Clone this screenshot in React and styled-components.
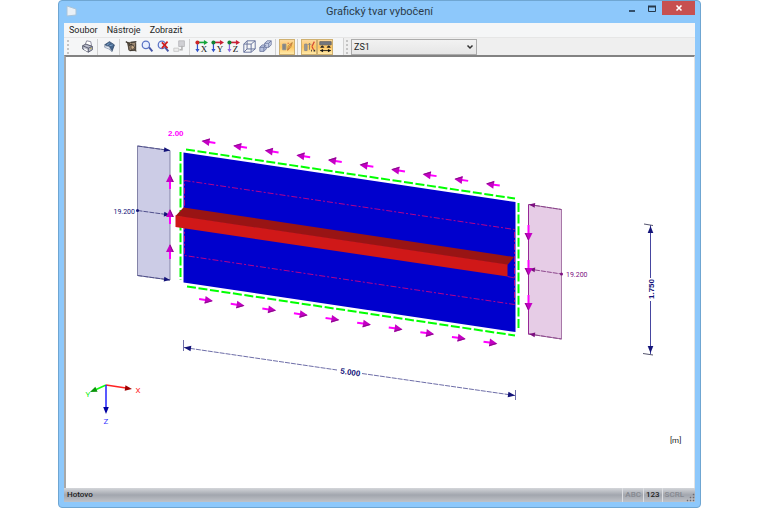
import React, { useState } from "react";
import styled, { createGlobalStyle } from "styled-components";

const NAVY = "#14147a";
const PURPLE = "#7d1080";

const steps = [0, 1, 2, 3, 4, 5, 6, 7, 8, 9];

const menuItems = ["Soubor", "Nástroje", "Zobrazit"];

const PrintIcon = () => (
  <Icon>
    <path d="M5 6 7 1l5 1 1 5z" fill="#fff" stroke="#77778c" />
    <path d="M2 7l4-2 8 3v4l-5 3-7-4z" fill="#b9bccb" stroke="#4a4d60" />
    <path d="M2 7l7 3 5-2M9 10v5" fill="none" stroke="#4a4d60" />
    <path d="M4 10l4 2v2l-4-2z" fill="#fff" />
    <path d="M11 11l2-1" stroke="#c8b428" />
  </Icon>
);

const BookIcon = () => (
  <Icon>
    <path d="M2 6l6-4 6 4-3 8-3-6z" fill="#44658c" stroke="#2f4667" />
    <path d="M2 7l5 1 4 6-4-3-5-2z" fill="#e8edf5" stroke="#8b99ae" />
    <path d="M5 6l3-2M8 7l4-1" stroke="#8fb2d8" />
  </Icon>
);

const SceneIcon = () => (
  <Icon>
    <path d="M3 3h10v10H5z" fill="#a08c76" stroke="#5c5248" />
    <path d="M1 2l5 3M7 3l7-1M4 7l5-2M6 13l7-1" stroke="#3f3931" strokeWidth="1.500" />
    <path d="M7 8l3-2 2 4-4 2z" fill="#c9ac88" stroke="#4a4037" />
    <path d="M11 11l3 3M4 4l1 8M13 4v8" stroke="#51483d" strokeWidth="1.500" />
  </Icon>
);

const ZoomIcon = ({ cancel }) => (
  <Icon>
    <circle cx="6" cy="6" r="4.500" fill="#e8efff" stroke="#5b73c4" strokeWidth="1.500" />
    <path d="M10 9l4 5" stroke="#4656a6" strokeWidth="2.400" />
    {cancel && <path d="M6 3l7 7M13 2l-7 8" stroke="#cf1d1d" strokeWidth="2" />}
  </Icon>
);

const PasteIcon = () => (
  <Icon>
    <path d="M7 1h7v7H7z" fill="#d0d0d4" stroke="#b4b4b8" />
    <path d="M1 10h6v4H1z" fill="#ececec" stroke="#c4c4c4" />
    <path d="M11 7v5H8" stroke="#b4b4b4" strokeWidth="2" fill="none" />
  </Icon>
);

const AxisIcon = ({ name }) => (
  <Icon>
    <path d="M3 3v9" stroke={name === "Z" ? "#8a6be0" : "#3153c8"} strokeWidth="1.500" />
    <path d="M3 3h9" stroke={name === "X" ? "#15a53a" : "#c92036"} strokeWidth="2" />
    <path d="M11 0l5 3-5 3z" fill={name === "X" ? "#15a53a" : "#c92036"} />
    <circle cx="3" cy="3" r="2.500" fill={name === "X" ? "#cf2525" : "#128333"} />
    <path d="M.5 11h5L3 15z" fill={name === "Z" ? "#8a6be0" : "#3153c8"} />
    <text x="7" y="15" fontSize="11" fontFamily="Liberation Serif, serif" fill="#111">
      {name}
    </text>
  </Icon>
);

const CubeIcon = () => (
  <Icon>
    <path d="M1 5h9v10H1zM5 1h10v10H5zM1 5l4-4M10 5l5-4M10 15l5-4M1 15l4-4" fill="none" stroke="#68739c" strokeWidth="1.200" />
  </Icon>
);

const BoxesIcon = () => (
  <Icon>
    <path d="M1 9l3-3h5v5l-3 3H1z" fill="#b8c2df" stroke="#65719a" />
    <path d="M7 4l3-3h5v5l-3 3H7z" fill="#ccd4ea" stroke="#65719a" />
    <path d="M1 9h5v5M6 9l3-3M7 4h5v5M12 4l3-3" fill="none" stroke="#65719a" />
  </Icon>
);

const ShapeIcon = () => (
  <Icon>
    <path d="M2 5h4v7H2z" fill="#858585" stroke="#8f8f8f" />
    <path d="M8 12l1-5 5-4-2 6-3 3z" fill="#f6d36e" stroke="#b08a3c" />
    <path d="M8 4l2 0M8 13l5-9" stroke="#cb5a36" />
  </Icon>
);

const LoadIcon = () => (
  <Icon>
    <path d="M2 5h3v8H2z" fill="#999" stroke="#888" />
    <path d="M8 12V4M6 6l2-2 2 2" fill="none" stroke="#777" />
    <path d="M11 8l3-6M11 8l2 4" stroke="#d44a35" strokeWidth="1.500" />
    <path d="M10 13h1M13 13h2" stroke="#333" strokeWidth="2" />
  </Icon>
);

const DimensionIcon = () => (
  <Icon>
    <path d="M1 2h14v4H1z" fill="#73777f" stroke="#666" />
    <path d="M4 7l-2 2h4zM12 7l-2 2h4z" fill="#222" stroke="#222" />
    <path d="M2 13h12" stroke="#111" />
    <path d="M1 13l4-2v4zM15 13l-4-2v4z" fill="#111" />
  </Icon>
);

const tools = [
  [{ label: "Tisk", icon: <PrintIcon /> }],
  [{ label: "Nápověda", icon: <BookIcon /> }],
  [
    { label: "Pohled", icon: <SceneIcon /> },
    { label: "Lupa", icon: <ZoomIcon /> },
    { label: "Zrušit lupu", icon: <ZoomIcon cancel /> },
    { label: "Vložit", icon: <PasteIcon />, disabled: true },
  ],
  [
    { label: "Pohled X", icon: <AxisIcon name="X" /> },
    { label: "Pohled Y", icon: <AxisIcon name="Y" /> },
    { label: "Pohled Z", icon: <AxisIcon name="Z" /> },
    { label: "Izometrie", icon: <CubeIcon /> },
    { label: "Perspektiva", icon: <BoxesIcon /> },
  ],
  [{ label: "Tvar", icon: <ShapeIcon />, toggle: true }],
  [
    { label: "Zatížení", icon: <LoadIcon />, toggle: true },
    { label: "Kóty", icon: <DimensionIcon />, toggle: true },
  ],
];

// arrow of the given length, tip at x/y, pointing right before it is turned
const ForceArrow = ({ x, y, angle, length = 14 }) => (
  <g transform={`translate(${x} ${y}) rotate(${angle})`}>
    <path d={`M${-length} 0H-6`} stroke="#f0f" strokeWidth="2" />
    <path d="M0 0l-8-4v8z" fill="#c400c4" />
    <path d="M-1 0l-7 3" stroke="#870f87" />
  </g>
);

const LineArrow = ({ x, y, angle, color = NAVY, size = 6 }) => (
  <path
    d={`M0 0l${-size}-${size * 0.4}v${size * 0.8}z`}
    fill={color}
    transform={`translate(${x} ${y}) rotate(${angle})`}
  />
);

const Plate = () => (
  <g>
    <path d="M183.500 152.500L515.500 202v130L183.500 282.500z" fill="#0000cd" />
    <g fill="none" stroke="#0f0" strokeWidth="2" strokeDasharray="9 2.600">
      <path d="M186 149.500L515 198.500" />
      <path d="M187 286.500L515 335.500" />
      <path d="M180.500 152v128" />
      <path d="M518.500 203v127" />
    </g>
    <path
      d="M184.500 180.500L514.500 229.500V304.500L184.500 255.500z"
      fill="none"
      stroke="#b4008c"
      strokeDasharray="6 2 2 2"
    />
    <path d="M507.500 264.500L514 257v21l-6.500-1.500z" fill="#0000cd" />
    <path d="M507.500 276.500l7 1.500" stroke="#a8008c" />
    <path d="M175.500 216L183.500 207.500 514 257 507.500 265z" fill="#991414" />
    <path d="M175.500 215.500L507.500 264.500v12L175.500 227z" fill="#d01818" />
  </g>
);

const Loads = () => (
  <g>
    <path d="M137.500 146l32.500 4.500v129.500l-32.500-4.500z" fill="#cccce6" stroke="#8484a8" />
    {[146, 210.5, 275.5].map((y) => (
      <g key={y}>
        <path d={`M137.500 ${y}l32.500 4.500`} stroke="#50508c" strokeDasharray="5 1" />
        <LineArrow x={170} y={y + 4.5} angle={8} />
      </g>
    ))}
    <circle cx="137.500" cy="210.500" r="1.500" fill={NAVY} />
    <path d="M528.500 204.500l33 5v129.500l-33-5z" fill="#e6cce6" stroke="#a878a8" />
    <path d="M528.500 204.500v130" stroke="#962896" />
    {[204.5, 269, 334].map((y) => (
      <g key={y}>
        <path d={`M529 ${y}l32.500 5`} stroke="#8c468c" strokeDasharray="5 1" />
        <LineArrow x={529} y={y} angle={188} color={PURPLE} />
      </g>
    ))}
    <circle cx="561.500" cy="274" r="1.500" fill={PURPLE} />
    {[174, 209, 244].map((y) => (
      <ForceArrow key={y} x={170} y={y} angle={-90} length={15} />
    ))}
    {[241, 276, 311].map((y) => (
      <ForceArrow key={y} x={528.5} y={y} angle={90} length={16} />
    ))}
    {steps.map((i) => (
      <g key={i}>
        <ForceArrow x={201.5 + i * 31.6} y={141 + i * 4.74} angle={188} />
        <ForceArrow x={213 + i * 31.6} y={301 + i * 4.74} angle={8} />
      </g>
    ))}
    <Label x="135" y="214" $anchor="end" $color={NAVY}>19.200</Label>
    <Label x="566" y="277" $color={PURPLE}>19.200</Label>
    <Label x="168" y="136" $color="#f0f" $size="8px" $bold>2.00</Label>
  </g>
);

const Dimensions = () => (
  <g fill="none" stroke="#6e6ea8">
    <path d="M183.500 340v11M515.500 390v10" />
    <path d="M184 347.500L337 370M362 373.500L515 395.500" strokeDasharray="5 1" />
    <path d="M650.500 225v53M650.500 301v53" stroke="#4646a0" />
    <path d="M644 224l9 1.500M643 353.500l10 1.500" stroke="#55556e" />
    <g stroke="none">
      <LineArrow x={184} y={347.5} angle={188} size={7} />
      <LineArrow x={515} y={395.5} angle={8} size={7} />
      <LineArrow x={650.5} y={226} angle={-90} size={7} />
      <LineArrow x={650.5} y={353} angle={90} size={7} />
      <Label transform="translate(350 375) rotate(8)" $anchor="middle" $color={NAVY} $size="8px" $bold>
        5.000
      </Label>
      <Label transform="translate(654 289) rotate(-90)" $anchor="middle" $color={NAVY} $size="8px" $bold>
        1.750
      </Label>
    </g>
  </g>
);

const Axes = () => (
  <g>
    <path d="M106 385l20 3" stroke="#f22" strokeWidth="1.500" />
    <LineArrow x={132} y={389} angle={8} color="#a00000" size={7} />
    <path d="M106 385l-11 5" stroke="#1f1" strokeWidth="1.500" />
    <LineArrow x={90} y={392} angle={157} color="#0a960a" size={7} />
    <path d="M106 385v24" stroke="#22f" strokeWidth="1.500" />
    <LineArrow x={106} y={414} angle={90} color="#0000a0" size={7} />
    <Label x="138" y="393" $anchor="middle" $color="#f22" $size="8px">X</Label>
    <Label x="88" y="397" $anchor="middle" $color="#1e1" $size="8px">Y</Label>
    <Label x="106" y="424" $anchor="middle" $color="#33f" $size="8px">Z</Label>
  </g>
);

const App = () => {
  const [loadCase, setLoadCase] = useState("ZS1");
  const [active, setActive] = useState(["Tvar", "Zatížení", "Kóty"]);

  const handleToggle = (tool) => {
    if (!tool.toggle) return;
    setActive((prev) =>
      prev.includes(tool.label)
        ? prev.filter((label) => label !== tool.label)
        : [...prev, tool.label]
    );
  };

  return (
    <Page>
      <GlobalStyle />
      <Window>
        <TitleBar>
          <AppIcon viewBox="0 0 12 12" aria-hidden="true">
            <path d="M1 1l9 3v6l-9 1z" fill="#e9f0f6" stroke="#a9c4da" />
          </AppIcon>
          <Title>Grafický tvar vybočení</Title>
          <WindowButtons>
            <WindowButton aria-label="Minimalizovat">
              <svg width="8" height="8"><path d="M1 7h6" stroke="#34506c" strokeWidth="2" /></svg>
            </WindowButton>
            <WindowButton aria-label="Maximalizovat">
              <svg width="8" height="8"><path d="M.5 2.500h7v5h-7z" fill="none" stroke="#26384a" /><path d="M0 2.500h8" stroke="#26384a" strokeWidth="2" /></svg>
            </WindowButton>
            <WindowButton aria-label="Zavřít" $close>
              <svg width="8" height="8"><path d="M1.500 1.500l5 5M6.500 1.500l-5 5" stroke="#fff" strokeWidth="1.600" /></svg>
            </WindowButton>
          </WindowButtons>
        </TitleBar>
        <MenuBar>
          {menuItems.map((item) => (
            <MenuButton key={item}>{item}</MenuButton>
          ))}
        </MenuBar>
        <ToolRow>
          <Toolbar>
            <Grip />
            {tools.map((group) => (
              <ToolGroup key={group[0].label}>
                {group.map((tool) => (
                  <ToolButton
                    key={tool.label}
                    aria-label={tool.label}
                    disabled={tool.disabled}
                    $active={active.includes(tool.label)}
                    onClick={() => handleToggle(tool)}
                  >
                    {tool.icon}
                  </ToolButton>
                ))}
              </ToolGroup>
            ))}
          </Toolbar>
          <CaseBar>
            <Grip />
            <SelectWrap>
              <select
                aria-label="Zatěžovací stav"
                value={loadCase}
                onChange={(e) => setLoadCase(e.target.value)}
              >
                <option>ZS1</option>
              </select>
              <svg width="8" height="6" viewBox="0 0 8 6">
                <path d="M1.500 1.500L4 4l2.500-2.500" fill="none" stroke="#333" strokeWidth="1.500" />
              </svg>
            </SelectWrap>
          </CaseBar>
        </ToolRow>
        <Viewport>
          <Drawing viewBox="66 57 628 431" preserveAspectRatio="xMinYMin meet">
            <Plate />
            <Loads />
            <Dimensions />
            <Axes />
            <Label x="670" y="443" $color="#222" $size="8px">[m]</Label>
          </Drawing>
        </Viewport>
        <StatusBar>
          <StatusText>Hotovo</StatusText>
          <StatusCell $off>ABC</StatusCell>
          <StatusCell>123</StatusCell>
          <StatusCell $off>SCRL</StatusCell>
          <SizeGrip viewBox="0 0 9 9" aria-hidden="true">
            <path d="M7 1h1v1H7zM7 4h1v1H7zM7 7h1v1H7zM4 4h1v1H4zM4 7h1v1H4zM1 7h1v1H1z" fill="#54575e" stroke="#74777e" strokeWidth=".5" />
          </SizeGrip>
        </StatusBar>
      </Window>
    </Page>
  );
};

const GlobalStyle = createGlobalStyle`
  * {
    box-sizing: border-box;
  }
  body {
    margin: 0;
    background: #fff;
    font-family: Roboto, "Open Sans", sans-serif;
    font-size: 9px;
    color: #1e1e1e;
  }
  button, select {
    font: inherit;
    color: inherit;
    border: none;
    background: none;
    padding: 0;
    margin: 0;
  }
`;

const Page = styled.div`
  display: flex;
  min-height: 100vh;
  padding: 0 59px 0 58px;
`;

const Window = styled.main`
  flex: 1;
  min-width: 0;
  display: flex;
  flex-direction: column;
  padding: 0 5px 5px;
  border: 1px solid #6fa6d2;
  border-radius: 4px;
  background: #8dc8fb;
`;

const TitleBar = styled.header`
  display: grid;
  grid-template-columns: 1fr auto 1fr;
  height: 22px;
`;

const AppIcon = styled.svg`
  width: 12px;
  height: 12px;
  margin: 4px 0 0 2px;
`;

const Title = styled.h1`
  margin: 0;
  font-size: 11px;
  font-weight: 400;
  line-height: 21px;
  color: #2b3b49;
`;

const WindowButtons = styled.div`
  display: flex;
  justify-content: flex-end;
`;

const WindowButton = styled.button`
  display: flex;
  align-items: center;
  justify-content: center;
  width: ${({ $close }) => ($close ? "33px" : "20px")};
  height: 14px;
  background: ${({ $close }) => ($close ? "#c75050" : "transparent")};
`;

const MenuBar = styled.nav`
  display: flex;
  gap: 9px;
  height: 14px;
  padding-left: 5px;
  background: #f5f6f7;
`;

const MenuButton = styled.button`
  line-height: 14px;
`;

const ToolRow = styled.div`
  display: flex;
  height: 18px;
  border-top: 1px solid #e6e6e6;
  background: #efefef;
`;

const Toolbar = styled.div`
  display: flex;
  align-items: center;
  width: 280px;
  padding-left: 3px;
  border-right: 1px solid #d2d2d2;
  background: #f5f6f7;
`;

const Grip = styled.span`
  width: 2px;
  height: 14px;
  background: repeating-linear-gradient(#c4c4c4 0 2px, transparent 2px 4px);
`;

const ToolGroup = styled.div`
  display: flex;
  padding: 0 2px 0 3px;
  & + & {
    border-left: 1px solid #d0d0d0;
  }
  ${Grip} + & {
    padding-left: 10px;
  }
`;

const ToolButton = styled.button`
  display: flex;
  align-items: center;
  justify-content: center;
  width: 16px;
  height: 16px;
  border: 1px solid ${({ $active }) => ($active ? "#cfb070" : "transparent")};
  background: ${({ $active }) =>
    $active ? "linear-gradient(#fbd9a0, #ffc660 50%, #ffe9a8)" : "none"};
`;

const Icon = styled.svg.attrs({ viewBox: "0 0 16 16" })`
  flex: none;
  width: 13px;
  height: 13px;
`;

const CaseBar = styled.div`
  display: flex;
  align-items: center;
  gap: 3px;
  padding-left: 2px;
`;

const SelectWrap = styled.div`
  display: flex;
  align-items: center;
  width: 126px;
  height: 16px;
  padding-right: 2px;
  border: 1px solid #acacac;
  background: linear-gradient(#f2f2f2, #e6e6e6);
  select {
    flex: 1;
    height: 14px;
    padding-left: 2px;
    line-height: 14px;
    appearance: none;
    outline: none;
  }
`;

const Viewport = styled.section`
  flex: 1;
  border: solid;
  border-width: 2px 1px 0 2px;
  border-color: #828282 #e3e3e3 #e3e3e3 #a8a8a8;
  background: #fff;
`;

const Drawing = styled.svg`
  display: block;
  width: 100%;
  height: auto;
`;

const Label = styled.text`
  font-family: ${({ $bold }) =>
    $bold ? '"Liberation Sans", sans-serif' : "Roboto, sans-serif"};
  font-size: ${({ $size }) => $size || "7px"};
  font-weight: ${({ $bold }) => ($bold ? 700 : 400)};
  text-anchor: ${({ $anchor }) => $anchor || "start"};
  fill: ${({ $color }) => $color};
`;

const StatusBar = styled.footer`
  display: flex;
  align-items: center;
  height: 14px;
  font-size: 8px;
  font-weight: 500;
  line-height: 14px;
  background: linear-gradient(#d4d6da, #a2a6ae 50%, #bfc2c8);
`;

const StatusText = styled.span`
  flex: 1;
  padding-left: 3px;
`;

const StatusCell = styled.span`
  padding: 0 2px;
  border-left: 1px solid #dcdee2;
  color: ${({ $off }) => ($off ? "#868990" : "#1e1e1e")};
`;

const SizeGrip = styled.svg`
  align-self: flex-end;
  width: 9px;
  height: 9px;
`;

export default App;
